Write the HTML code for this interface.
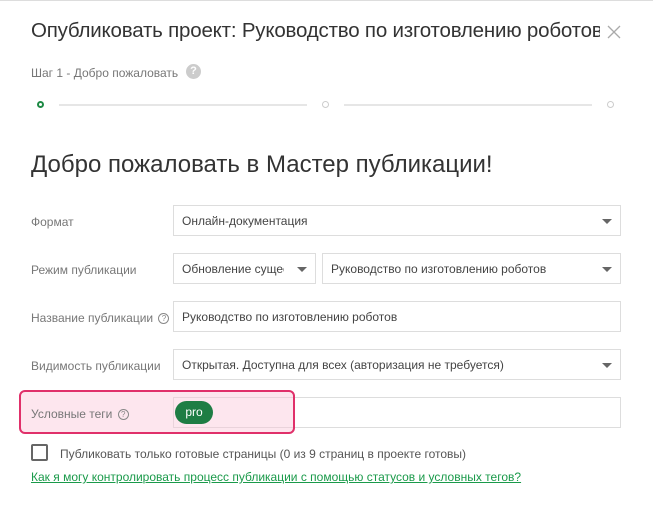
<!DOCTYPE html>
<html><head><meta charset="utf-8"><style>
*{box-sizing:border-box;margin:0;padding:0}
body{width:653px;height:525px;background:#fff;font-family:"Liberation Sans",sans-serif;position:relative;overflow:hidden;border-top:1px solid #ddd}
.a{position:absolute;white-space:nowrap}
.title{left:31px;top:18px;width:569px;overflow:hidden;font-size:20.5px;color:#333;letter-spacing:-0.2px}
.lbl{font-size:12px;color:#777;left:31px}
.box{position:absolute;border:1px solid #ddd;background:#fff;font-size:12px;color:#444;padding-left:8px;line-height:31px;overflow:hidden;white-space:nowrap}
.arr{position:absolute;right:8px;top:13px;width:0;height:0;border-left:5px solid transparent;border-right:5px solid transparent;border-top:5px solid #666}
.q{display:inline-block;width:11px;height:11px;border:1px solid #888;border-radius:50%;font-size:8px;line-height:9px;text-align:center;color:#888;vertical-align:1px;margin-left:2px}
.dot{position:absolute;width:7px;height:7px;border-radius:50%;border:1.5px solid #ccc;background:#fff}
.line{position:absolute;height:2px;background:#e6e6e6;top:103px}
</style></head><body>
<div class="a title">Опубликовать проект: Руководство по изготовлению роботов</div>
<svg class="a" style="left:607px;top:24px" width="14" height="14"><path d="M1 1L13 13M13 1L1 13" stroke="#aaa" stroke-width="1.3"/></svg>
<div class="a" style="left:31px;top:65px;font-size:12px;color:#777">Шаг 1 - Добро пожаловать</div>
<div class="a" style="left:186px;top:63px;width:15px;height:15px;border-radius:50%;background:#ccc;color:#fff;font-size:11px;font-weight:bold;text-align:center;line-height:15px">?</div>
<div class="dot" style="left:37px;top:100px;border-color:#1e8a45;border-width:2px"></div>
<div class="line" style="left:59px;width:248px"></div>
<div class="dot" style="left:322px;top:100px"></div>
<div class="line" style="left:344px;width:248px"></div>
<div class="dot" style="left:607px;top:100px"></div>
<div class="a" style="left:31px;top:150px;font-size:24px;color:#333">Добро пожаловать в Мастер публикации!</div>

<div class="a lbl" style="top:214px">Формат</div>
<div class="box" style="left:173px;top:204px;width:448px;height:31px">Онлайн-документация<div class="arr"></div></div>

<div class="a lbl" style="top:262px">Режим публикации</div>
<div class="box" style="left:173px;top:252px;width:143px;height:31px"><span style="display:inline-block;width:102px;overflow:hidden;vertical-align:top">Обновление существующего</span><div class="arr"></div></div>
<div class="box" style="left:322px;top:252px;width:299px;height:31px">Руководство по изготовлению роботов<div class="arr"></div></div>

<div class="a lbl" style="top:310px">Название публикации <span class="q">?</span></div>
<div class="box" style="left:173px;top:300px;width:448px;height:31px">Руководство по изготовлению роботов</div>

<div class="a lbl" style="top:358px">Видимость публикации</div>
<div class="box" style="left:173px;top:348px;width:448px;height:31px">Открытая. Доступна для всех (авторизация не требуется)<div class="arr"></div></div>

<div class="box" style="left:173px;top:396px;width:448px;height:31px"></div>
<div class="a" style="left:19px;top:389px;width:276px;height:44px;border:2px solid #e0306a;border-radius:6px;background:rgba(250,200,218,0.45)"></div>
<div class="a lbl" style="top:406px">Условные теги <span class="q">?</span></div>
<div class="a" style="left:175px;top:400px;width:38px;height:23px;border-radius:12px;background:#1e7d44;color:#fff;font-size:12px;text-align:center;line-height:23px">pro</div>

<div class="a" style="left:31px;top:443px;width:17px;height:17px;border:2px solid #666;border-radius:2px"></div>
<div class="a" style="left:60px;top:446px;font-size:12px;color:#555">Публиковать только готовые страницы (0 из 9 страниц в проекте готовы)</div>
<div class="a" style="left:31px;top:469px;font-size:12px;color:#1a9a4a;text-decoration:underline">Как я могу контролировать процесс публикации с помощью статусов и условных тегов?</div>
</body></html>
